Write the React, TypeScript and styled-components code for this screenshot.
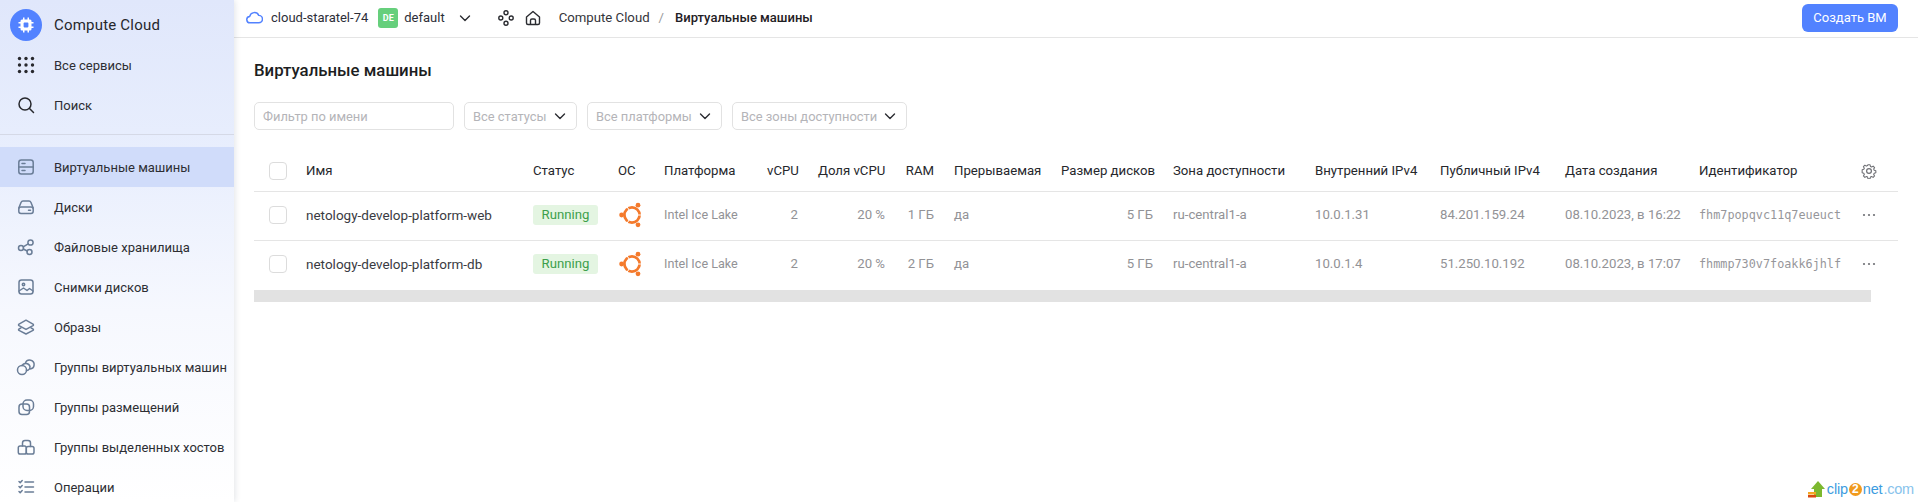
import React from "react";
import styled, { createGlobalStyle } from "styled-components";

const Global = createGlobalStyle`
  html, body { margin: 0; padding: 0; width: 100%; height: 100%; overflow: hidden; background: #fff; }
  body { font-family: Roboto, "Noto Sans", "Liberation Sans", sans-serif; font-size: 13px; color: #2b2c31; }
  * { box-sizing: border-box; }
`;

const Page = styled.div`
  display: flex;
  width: 1918px;
  height: 502px;
  position: relative;
  overflow: hidden;
`;

const Sidebar = styled.aside`
  width: 234px;
  flex: none;
  height: 502px;
  overflow: hidden;
  background: linear-gradient(180deg, #e0e7fb 0%, #e8eefd 30%, #f6f8fe 62%, #ffffff 100%);
  box-shadow: 1px 0 6px rgba(20, 30, 60, 0.12);
  position: relative;
  z-index: 1;
  display: flex;
  flex-direction: column;
  padding-top: 6px;
`;

const LogoRow = styled.div`
  display: flex;
  align-items: center;
  flex: none;
  height: 39px;
  padding: 0 0 1px 10px;
  gap: 12px;
  font-size: 15px;
  letter-spacing: 0.2px;
  color: #26272c;
`;

const LogoCircle = styled.div`
  width: 32px;
  height: 32px;
  border-radius: 50%;
  background: #5282ff;
  display: flex;
  align-items: center;
  justify-content: center;
`;

const NavGroup = styled.nav`
  display: flex;
  flex: none;
  flex-direction: column;
`;

const Divider = styled.div`
  height: 1px;
  flex: none;
  background: #d5d9e6;
  margin: 9px 0 12px;
`;

const NavItem = styled.div<{ $active?: boolean }>`
  display: flex;
  align-items: center;
  height: 40px;
  flex: none;
  padding-left: 16px;
  gap: 18px;
  font-size: 13px;
  white-space: nowrap;
  color: #2d2e33;
  background: ${(p) => (p.$active ? "#d0dcfa" : "transparent")};
`;

const NavIcon = styled.svg<{ $dark?: boolean }>`
  width: 20px;
  height: 20px;
  flex: none;
  fill: none;
  stroke: ${(p) => (p.$dark ? "#27282d" : "#6a7d97")};
  stroke-width: 1.5;
  stroke-linecap: round;
  stroke-linejoin: round;
`;

const GridIcon = styled.svg`
  width: 20px;
  height: 20px;
  flex: none;
  fill: #27282d;
`;

const Main = styled.main`
  flex: 1;
  min-width: 0;
  display: flex;
  flex-direction: column;
`;

const Header = styled.header`
  height: 38px;
  flex: none;
  border-bottom: 1px solid #e5e5e5;
  display: flex;
  align-items: center;
  padding: 0 20px 2px 12px;
`;

const Cloud = styled.svg`
  width: 17px;
  height: 17px;
  flex: none;
  fill: none;
  stroke: #5282ff;
  stroke-width: 1.4;
  stroke-linejoin: round;
  margin-right: 8px;
`;

const HeaderText = styled.span`
  font-size: 13px;
  color: #2d2e38;
  white-space: nowrap;
`;

const Badge = styled.span`
  width: 20px;
  height: 20px;
  border-radius: 3px;
  background: #66cf7c;
  color: #fff;
  font-size: 9px;
  font-weight: 700;
  display: flex;
  align-items: center;
  justify-content: center;
  margin: 0 6px 0 10px;
`;

const Chevron = styled.svg<{ $left?: number }>`
  width: 14px;
  height: 14px;
  flex: none;
  fill: none;
  stroke: #2b2c31;
  stroke-width: 1.4;
  stroke-linecap: round;
  stroke-linejoin: round;
  margin-left: ${(p) => p.$left ?? 0}px;
`;

const HeadIcon = styled.svg<{ $left: number }>`
  width: 18px;
  height: 18px;
  flex: none;
  fill: none;
  stroke: #2b2c31;
  stroke-width: 1.4;
  stroke-linejoin: round;
  margin-left: ${(p) => p.$left}px;
`;

const Crumbs = styled.div`
  display: flex;
  align-items: center;
  margin-left: 17px;
  font-size: 13.2px;
  color: #34353a;
  white-space: nowrap;
`;

const Slash = styled.span`
  color: #9a9a9e;
  margin: 0 11px 0 9px;
`;

const Current = styled.span`
  color: #1f2024;
  font-weight: 500;
  font-size: 13px;
`;

const Create = styled.button`
  margin-left: auto;
  width: 96px;
  height: 28px;
  border: 0;
  border-radius: 6px;
  background: #5282ff;
  color: #fff;
  font: inherit;
  font-size: 13px;
`;

const Content = styled.div`
  padding: 0 20px;
`;

const Title = styled.h1`
  margin: 0;
  height: 64px;
  padding-top: 22px;
  line-height: 20px;
  font-size: 16.8px;
  font-weight: 500;
  color: #1d1e22;
`;

const Filters = styled.div`
  display: flex;
  gap: 10px;
  height: 28px;
  margin-bottom: 20px;
`;

const FilterBox = styled.div<{ $w: number }>`
  width: ${(p) => p.$w}px;
  height: 28px;
  border: 1px solid #e2e2e2;
  border-radius: 5px;
  display: flex;
  align-items: center;
  justify-content: space-between;
  padding: 0 9px 0 8px;
  font-size: 12.9px;
  color: #b4b4b8;
  white-space: nowrap;
`;

const Table = styled.table`
  width: 1644px;
  table-layout: fixed;
  border-collapse: collapse;
`;

const HeadCell = styled.th<{ $right?: boolean }>`
  height: 41px;
  padding: 1px 10px 0;
  font-size: 13.2px;
  font-weight: 400;
  color: #26272c;
  white-space: nowrap;
  overflow: visible;
  text-align: ${(p) => (p.$right ? "right" : "left")};
  border-bottom: 1px solid #e5e5e5;
`;

const Row = styled.tr`
  &:not(:last-child) td {
    border-bottom: 1px solid #e5e5e5;
  }
`;

const Cell = styled.td<{ $right?: boolean; $dark?: boolean; $size?: number }>`
  height: 49px;
  padding: 0 10px 2px;
  font-size: ${(p) => p.$size ?? 13.2}px;
  white-space: nowrap;
  overflow: visible;
  color: ${(p) => (p.$dark ? "#3a3b42" : "#929296")};
  text-align: ${(p) => (p.$right ? "right" : "left")};
`;

const Mono = styled.span`
  font-family: "DejaVu Sans Mono", "Liberation Mono", monospace;
  font-size: 11.8px;
  color: #96969a;
`;

const Check = styled.div`
  width: 18px;
  height: 18px;
  margin-left: 5px;
  border: 1px solid #dcdcdc;
  border-radius: 4px;
  background: #fff;
`;

const Status = styled.span`
  display: inline-flex;
  align-items: center;
  justify-content: center;
  width: 65px;
  height: 20px;
  border-radius: 3px;
  background: #e4f5e2;
  color: #3c9f4b;
  font-size: 13.2px;
`;

const OsIcon = styled.svg`
  display: block;
  width: 26px;
  height: 26px;
`;

const Dots = styled.svg`
  display: block;
  width: 16px;
  height: 16px;
  margin-left: 1px;
  fill: #6f7075;
`;

const Gear = styled.svg`
  display: block;
  width: 16px;
  height: 16px;
  margin-left: 1px;
  fill: none;
  stroke: #6f7075;
  stroke-width: 1.2;
  stroke-linejoin: round;
`;

const Scrollbar = styled.div`
  height: 12px;
  margin: 1px 27px 0 0;
  background: #e2e2e2;
`;

const Watermark = styled.div`
  position: absolute;
  right: 4px;
  bottom: 4px;
  height: 18px;
  display: flex;
  align-items: center;
  gap: 1px;
  font-family: "Liberation Sans", sans-serif;
  font-size: 14.5px;
  letter-spacing: -0.2px;
  color: #3c9ce0;
`;

const Two = styled.span`
  width: 13px;
  height: 13px;
  border-radius: 50%;
  background: #f19a1d;
  color: #fff;
  font-weight: 700;
  font-size: 12px;
  display: inline-flex;
  align-items: center;
  justify-content: center;
`;

const Tld = styled.span`
  color: #87c3ec;
`;

const ChevronIcon = (p: { left?: number }) => (
  <Chevron viewBox="0 0 14 14" $left={p.left}>
    <path d="M2.5 5 L7 9.5 L11.5 5" />
  </Chevron>
);

const icons: Record<string, React.ReactNode> = {
  search: (
    <>
      <circle cx="9" cy="9" r="6" />
      <path d="M13.5 13.5 L17.5 17.5" />
    </>
  ),
  vm: (
    <>
      <rect x="2.8" y="3" width="14.4" height="14" rx="2.5" />
      <path d="M2.8 10 H17.2 M6 6.5 H9 M6 13.5 H9" />
    </>
  ),
  disk: (
    <>
      <path d="M2.8 11 L5 5.5 C5.4 4.6 6 4 7 4 H13 C14 4 14.6 4.6 15 5.5 L17.2 11" />
      <rect x="2.8" y="10" width="14.4" height="6.5" rx="2.2" />
      <path d="M12.5 13.2 H14.5" />
    </>
  ),
  files: (
    <>
      <circle cx="5" cy="11" r="2.5" />
      <circle cx="14.5" cy="5.5" r="2.6" />
      <circle cx="13.5" cy="15" r="2.5" />
      <path d="M7.2 9.8 L12.2 6.8 M7.3 12 L11.2 14" />
    </>
  ),
  image: (
    <>
      <rect x="3" y="3" width="14" height="14" rx="2.5" />
      <circle cx="7.5" cy="7.5" r="1.2" />
      <path d="M3 14 L7.5 11 L11 13.5 L13.5 11.5 L17 14" />
    </>
  ),
  layers: (
    <>
      <path d="M10 3.2 L17 7.2 C17.6 7.6 17.6 8.2 17 8.6 L10 12.4 L3 8.6 C2.4 8.2 2.4 7.6 3 7.2 Z" />
      <path d="M5 10.8 L3 12 C2.4 12.4 2.4 13 3 13.4 L10 17 L17 13.4 C17.6 13 17.6 12.4 17 12 L15 10.8" />
    </>
  ),
  vmgroup: (
    <>
      <circle cx="6" cy="13" r="4.500" />
      <path d="M6 8.500 A4.500 4.500 0 0 1 14 9.500 C14 11.500 12.500 13.500 10.500 13.500" />
      <path d="M9.500 5.700 A4.500 4.500 0 1 1 14 12" />
    </>
  ),
  place: (
    <>
      <rect x="3" y="7" width="10.5" height="10.5" rx="3" />
      <rect x="7" y="3" width="10.5" height="10.5" rx="4" />
    </>
  ),
  hosts: (
    <>
      <rect x="2.3" y="9" width="8" height="8" rx="1.8" />
      <rect x="10.3" y="9.5" width="7.7" height="7.5" rx="1.8" />
      <path d="M6.5 9 V6 C6.5 4.5 7.5 3.5 9 3.5 H12 C13.5 3.5 14.5 4.5 14.5 6 V9.5" />
    </>
  ),
  ops: (
    <>
      <path d="M9 5 H17.5 M9 10 H17.5 M9 15 H17.5" />
      <path d="M3 4.5 L4.2 5.7 L6.2 3.6 M3 9.5 L4.2 10.7 L6.2 8.6 M3 14.5 L4.2 15.7 L6.2 13.6" />
    </>
  ),
};

const Grid = () => (
  <GridIcon viewBox="0 0 20 20">
    {[3.5, 10, 16.5].flatMap((x) =>
      [3.5, 10, 16.5].map((y) => <circle key={`${x}-${y}`} cx={x} cy={y} r="1.7" />)
    )}
  </GridIcon>
);

const navItems: { label: string; icon: string; active?: boolean }[] = [
  { label: "Виртуальные машины", icon: "vm", active: true },
  { label: "Диски", icon: "disk" },
  { label: "Файловые хранилища", icon: "files" },
  { label: "Снимки дисков", icon: "image" },
  { label: "Образы", icon: "layers" },
  { label: "Группы виртуальных машин", icon: "vmgroup" },
  { label: "Группы размещений", icon: "place" },
  { label: "Группы выделенных хостов", icon: "hosts" },
  { label: "Операции", icon: "ops" },
];

const Ubuntu = () => (
  <OsIcon viewBox="0 0 26 26">
    <circle cx="14" cy="13" r="7.6" fill="none" stroke="#f47a2c" strokeWidth="2.8" />
    <path d="M18 13 L25 13 M12 9.600 L8 3 M12 16.400 L8 23" stroke="#fff" strokeWidth="1" />
    <circle cx="3.6" cy="13" r="2.4" fill="#f47a2c" />
    <circle cx="20" cy="3.2" r="2.4" fill="#f47a2c" />
    <circle cx="20" cy="22.8" r="2.4" fill="#f47a2c" />
  </OsIcon>
);

const columns = [42, 227, 85, 46, 103, 51, 87, 49, 107, 112, 142, 125, 125, 134, 161, 48];

const heads: { label: string; right?: boolean }[] = [
  { label: "Имя" },
  { label: "Статус" },
  { label: "ОС" },
  { label: "Платформа" },
  { label: "vCPU", right: true },
  { label: "Доля vCPU", right: true },
  { label: "RAM", right: true },
  { label: "Прерываемая" },
  { label: "Размер дисков", right: true },
  { label: "Зона доступности" },
  { label: "Внутренний IPv4" },
  { label: "Публичный IPv4" },
  { label: "Дата создания" },
  { label: "Идентификатор" },
];

const rows = [
  {
    name: "netology-develop-platform-web",
    ram: "1 ГБ",
    ip: "10.0.1.31",
    pub: "84.201.159.24",
    date: "08.10.2023, в 16:22",
    id: "fhm7popqvc11q7eueuct",
  },
  {
    name: "netology-develop-platform-db",
    ram: "2 ГБ",
    ip: "10.0.1.4",
    pub: "51.250.10.192",
    date: "08.10.2023, в 17:07",
    id: "fhmmp730v7foakk6jhlf",
  },
];

export default function App() {
  return (
    <Page>
      <Global />
      <Sidebar>
        <LogoRow>
          <LogoCircle>
            <svg width="18" height="18" viewBox="0 0 18 18">
              <path
                d="M6 1.500h1.500v2h3v-2H12v2h1a1.500 1.500 0 0 1 1.500 1.500v1h2v1.500h-2v3h2V12h-2v1a1.500 1.500 0 0 1-1.500 1.500h-1v2h-1.500v-2h-3v2H6v-2H5A1.500 1.500 0 0 1 3.500 13v-1h-2v-1.500h2v-3h-2V6h2V5A1.500 1.500 0 0 1 5 3.500h1z"
                fill="#fff"
              />
              <rect x="6.600" y="6.600" width="4.800" height="4.800" rx="0.800" fill="#5282ff" />
            </svg>
          </LogoCircle>
          Compute Cloud
        </LogoRow>
        <NavGroup>
          <NavItem>
            <Grid />
            Все сервисы
          </NavItem>
          <NavItem>
            <NavIcon viewBox="0 0 20 20" $dark>{icons.search}</NavIcon>
            Поиск
          </NavItem>
        </NavGroup>
        <Divider />
        <NavGroup>
          {navItems.map((n) => (
            <NavItem key={n.label} $active={n.active}>
              <NavIcon viewBox="0 0 20 20">{icons[n.icon]}</NavIcon>
              {n.label}
            </NavItem>
          ))}
        </NavGroup>
      </Sidebar>
      <Main>
        <Header>
          <Cloud viewBox="0 0 16 16">
            <path d="M4 13 A3 3 0 0 1 3.500 7 A4.500 4.500 0 0 1 12 6 A3.500 3.500 0 0 1 12 13 Z" />
          </Cloud>
          <HeaderText>cloud-staratel-74</HeaderText>
          <Badge>DE</Badge>
          <HeaderText>default</HeaderText>
          <ChevronIcon left={13} />
          <HeadIcon viewBox="0 0 18 18" $left={25}>
            <circle cx="9" cy="3.800" r="2" />
            <circle cx="3.800" cy="9" r="2" />
            <circle cx="14.200" cy="9" r="2" />
            <circle cx="9" cy="14.200" r="2" />
          </HeadIcon>
          <HeadIcon viewBox="0 0 18 18" $left={9}>
            <path d="M2.500 8 L9 2.500 L15.500 8 V14 C15.500 15 15 15.500 14 15.500 H4 C3 15.500 2.500 15 2.500 14 Z" />
            <path d="M6.500 15.500 V11.500 C6.500 10.500 7.200 10 8 10 H10 C10.800 10 11.500 10.500 11.500 11.500 V15.500" />
          </HeadIcon>
          <Crumbs>
            Compute Cloud
            <Slash>/</Slash>
            <Current>Виртуальные машины</Current>
          </Crumbs>
          <Create>Создать ВМ</Create>
        </Header>
        <Content>
          <Title>Виртуальные машины</Title>
          <Filters>
            <FilterBox $w={200}>Фильтр по имени</FilterBox>
            <FilterBox $w={113}>
              Все статусы
              <ChevronIcon />
            </FilterBox>
            <FilterBox $w={135}>
              Все платформы
              <ChevronIcon />
            </FilterBox>
            <FilterBox $w={175}>
              Все зоны доступности
              <ChevronIcon />
            </FilterBox>
          </Filters>
          <Table>
            <colgroup>
              {columns.map((w, i) => (
                <col key={i} style={{ width: w }} />
              ))}
            </colgroup>
            <thead>
              <tr>
                <HeadCell>
                  <Check />
                </HeadCell>
                {heads.map((h) => (
                  <HeadCell key={h.label} $right={h.right}>
                    {h.label}
                  </HeadCell>
                ))}
                <HeadCell>
                  <Gear viewBox="0 0 16 16">
                    <path d="M6.800 1.500h2.400l.4 1.900 1.300.6 1.700-1 1.600 1.700-1 1.600.6 1.300 1.800.5v2.300l-1.800.5-.6 1.300 1 1.700-1.600 1.600-1.700-1-1.300.6-.4 1.900H6.800l-.4-1.900-1.300-.6-1.700 1-1.600-1.600 1-1.700-.6-1.300-1.800-.5V7.100l1.800-.5.6-1.300-1-1.600 1.600-1.700 1.700 1 1.300-.6z" transform="translate(0.800 0.400) scale(0.900)" />
                    <circle cx="8" cy="8" r="2.400" />
                  </Gear>
                </HeadCell>
              </tr>
            </thead>
            <tbody>
              {rows.map((r) => (
                <Row key={r.id}>
                  <Cell>
                    <Check />
                  </Cell>
                  <Cell $dark $size={13.5}>{r.name}</Cell>
                  <Cell>
                    <Status>Running</Status>
                  </Cell>
                  <Cell>
                    <Ubuntu />
                  </Cell>
                  <Cell $size={12.6}>Intel Ice Lake</Cell>
                  <Cell $right>2</Cell>
                  <Cell $right>20 %</Cell>
                  <Cell $right>{r.ram}</Cell>
                  <Cell>да</Cell>
                  <Cell $right>5 ГБ</Cell>
                  <Cell>ru-central1-a</Cell>
                  <Cell>{r.ip}</Cell>
                  <Cell>{r.pub}</Cell>
                  <Cell>{r.date}</Cell>
                  <Cell>
                    <Mono>{r.id}</Mono>
                  </Cell>
                  <Cell>
                    <Dots viewBox="0 0 16 16">
                      <circle cx="3" cy="8" r="1.100" />
                      <circle cx="8" cy="8" r="1.100" />
                      <circle cx="13" cy="8" r="1.100" />
                    </Dots>
                  </Cell>
                </Row>
              ))}
            </tbody>
          </Table>
          <Scrollbar />
        </Content>
      </Main>
      <Watermark>
        <svg width="18" height="17" viewBox="0 0 18 17">
          <path d="M10 0 L17 8 H14 V16 H6 V8 H3 Z" fill="#7cb82f" />
          <rect x="0" y="11" width="8" height="2.500" fill="#f5a623" />
          <rect x="0" y="14" width="8" height="2.500" fill="#d9480f" />
        </svg>
        clip
        <Two>2</Two>
        net<Tld>.com</Tld>
      </Watermark>
    </Page>
  );
}
